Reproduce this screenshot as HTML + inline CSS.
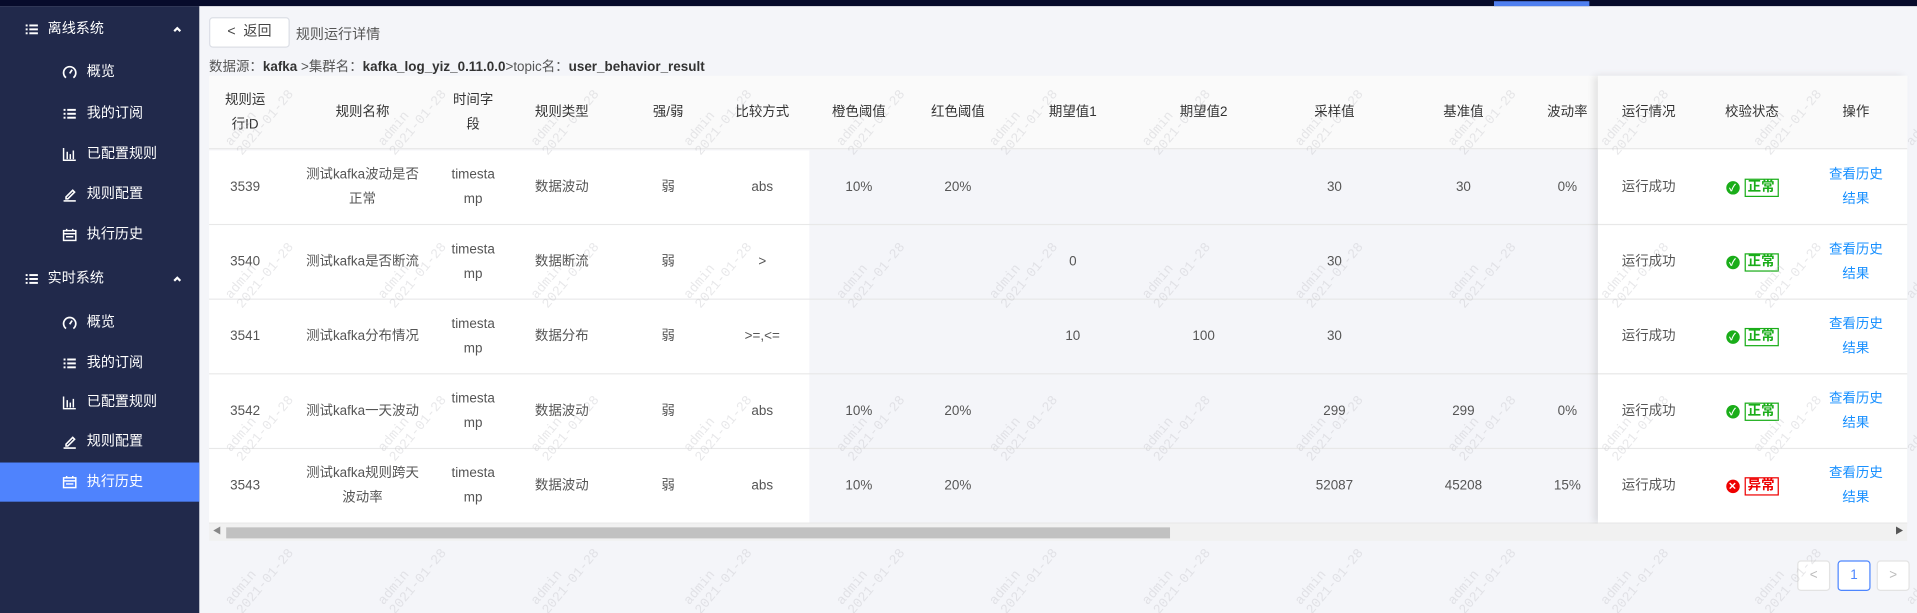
<!DOCTYPE html>
<html><head><meta charset="utf-8">
<style>
*{box-sizing:border-box;margin:0;padding:0}
html,body{width:1917px;height:613px;overflow:hidden;background:#f4f5f9}
body{font-family:"Liberation Sans","Noto Sans CJK SC",sans-serif}
#s{position:absolute;left:0;top:0;width:1568px;height:501px;transform:scale(1.22258,1.2236);transform-origin:0 0;background:#f4f5f9;overflow:hidden}
.top{position:absolute;left:0;top:0;width:1568px;height:5px;background:#070b2b;z-index:5}
.top i{position:absolute;left:1222px;top:1px;width:78px;height:4px;background:#4f7ff0}
.side{position:absolute;left:0;top:5px;width:163px;height:496px;background:#21294b;color:#fff;font-size:11.5px;z-index:4}
.mi{position:absolute;left:0;width:163px;height:32px;line-height:32px}
.mi svg{position:absolute;top:10px;width:12px;height:12px}
.mi .tx{position:absolute;top:0}
.act{background:#4f83fd}
.btn{position:absolute;left:171px;top:14px;width:66px;height:25px;background:#fff;border:1px solid #dcdfe6;border-radius:3px;font-size:11.5px;color:#444;line-height:23px;padding-left:14px}
.ttl{position:absolute;left:242px;top:20px;font-size:11.5px;color:#555}
.bc{position:absolute;left:171px;top:46px;font-size:11px;color:#555;white-space:nowrap}
.bc b{color:#333}
.tbl{position:absolute;left:171px;top:62px;width:1389px;height:380px;font-size:11px;color:#555}
.hd{position:absolute;left:0;top:0;width:1389px;height:60px;background:#fafafa;border-bottom:1px solid #e8e8e8}
.c{position:absolute;display:flex;align-items:center;justify-content:center;text-align:center;line-height:20px}
.hd .c{color:#333;height:60px;top:0}
.row{position:absolute;left:0;width:1389px;height:61px;border-bottom:1px solid #e8e8e8}
.wh{position:absolute;left:0;top:0;width:491px;height:60px;background:#fff}
.row .c{height:60px;top:0}
.fx{position:absolute;left:1136px;top:0;width:253px;height:366px;background:#fff;box-shadow:-3px 0 6px rgba(0,0,0,.1)}
.fx .r{position:absolute;left:0;width:253px;height:61px;border-bottom:1px solid #e8e8e8}
.fx .h{background:#fafafa;height:60px}
.tag{display:inline-block;border:1px solid #1aad19;color:#1aad19;font-weight:bold;font-size:11px;line-height:13px;padding:0 2px;margin-left:4px}
.dot{display:inline-block;width:11px;height:11px;border-radius:50%;background:#1aad19;color:#fff;font-size:8px;line-height:11px;text-align:center;font-weight:bold}
.bad .tag{border-color:#e00;color:#e00}.bad .dot{background:#e00}
.lnk{color:#1890ff}
.sb{position:absolute;left:0;top:366px;width:1389px;height:14px;background:#f1f1f1}
.sb .th{position:absolute;left:14px;top:3px;width:772px;height:9px;background:#c1c1c1}
.pg{position:absolute;top:458px;width:27px;height:25px;background:#fff;border:1px solid #e3e3e3;border-radius:3px;text-align:center;line-height:23px;font-size:11px;color:#bbb}
#wm{position:absolute;left:0;top:0;width:1568px;height:501px;z-index:3;pointer-events:none}
.wm{position:absolute;color:rgba(190,190,195,.35);font-family:"Liberation Mono",monospace;font-size:11px;line-height:12px;transform:rotate(-50deg);white-space:nowrap}
</style></head><body><div id="s">
<div class="top"><i></i></div>
<div class="side" id="side"></div>
<div class="btn">&lt;&nbsp; 返回</div>
<div class="ttl">规则运行详情</div>
<div class="bc">数据源：<b>kafka</b> &gt;集群名：<b>kafka_log_yiz_0.11.0.0</b>&gt;topic名：<b>user_behavior_result</b></div>
<div class="tbl">
<div class="hd">
<div class="c" style="left:0;width:59px">规则运<br>行ID</div>
<div class="c" style="left:59px;width:133px">规则名称</div>
<div class="c" style="left:192px;width:48px">时间字<br>段</div>
<div class="c" style="left:240px;width:97px">规则类型</div>
<div class="c" style="left:337px;width:77px">强/弱</div>
<div class="c" style="left:414px;width:77px">比较方式</div>
<div class="c" style="left:491px;width:81px">橙色阈值</div>
<div class="c" style="left:572px;width:81px">红色阈值</div>
<div class="c" style="left:653px;width:107px">期望值1</div>
<div class="c" style="left:760px;width:107px">期望值2</div>
<div class="c" style="left:867px;width:107px">采样值</div>
<div class="c" style="left:974px;width:104px">基准值</div>
<div class="c" style="left:1078px;width:66px">波动率</div>
</div>
<div id="rows"></div>
<div class="sb"><span style="position:absolute;left:3px;top:1px;font-size:7px;color:#888">◀</span><div class="th"></div><span style="position:absolute;right:3px;top:1px;font-size:7px;color:#555">▶</span></div>
</div>
<div class="pg" style="left:1470px">&lt;</div>
<div class="pg" style="left:1503px;border-color:#4d86ff;color:#4d86ff">1</div>
<div class="pg" style="left:1535px">&gt;</div>
<div id="wm"></div>
</div>
<script>
var I={
list:'<svg viewBox="0 0 12 12" fill="#fff"><rect x="1" y="2" width="1.6" height="1.6"/><rect x="4" y="2" width="7" height="1.6"/><rect x="1" y="5.2" width="1.6" height="1.6"/><rect x="4" y="5.2" width="7" height="1.6"/><rect x="1" y="8.4" width="1.6" height="1.6"/><rect x="4" y="8.4" width="7" height="1.6"/></svg>',
gauge:'<svg viewBox="0 0 12 12" fill="none" stroke="#fff" stroke-width="1.4"><path d="M3 10.5A5 5 0 1 1 9 10.5"/><path d="M6 7L8 4"/></svg>',
bar:'<svg viewBox="0 0 12 12" fill="none" stroke="#fff" stroke-width="1.2"><path d="M1 1V11H11"/><path d="M4 10V4M6.5 10V6M9 10V3"/></svg>',
pen:'<svg viewBox="0 0 12 12" fill="none" stroke="#fff" stroke-width="1.3"><path d="M3 8L8.5 2.5L10 4L4.5 9.5H3Z"/><path d="M1 11.2H11"/></svg>',
cal:'<svg viewBox="0 0 12 12" fill="none" stroke="#fff" stroke-width="1.2"><rect x="1" y="2.5" width="10" height="8"/><path d="M1 5H11M3.5 1V3M8.5 1V3M3 7.5H9"/></svg>'};
var M=[[3,20,39,'list','离线系统',1,0],[38,51,71,'gauge','概览',0,0],[72,51,71,'list','我的订阅',0,0],[105,51,71,'bar','已配置规则',0,0],[138,51,71,'pen','规则配置',0,0],[171,51,71,'cal','执行历史',0,0],
[207,20,39,'list','实时系统',1,0],[243,51,71,'gauge','概览',0,0],[276,51,71,'list','我的订阅',0,0],[308,51,71,'bar','已配置规则',0,0],[340,51,71,'pen','规则配置',0,0],[373,51,71,'cal','执行历史',0,1]];
var s="";M.forEach(function(m){s+='<div class="mi'+(m[6]?' act':'')+'" style="top:'+m[0]+'px">'+I[m[3]].replace('<svg','<svg style="left:'+m[1]+'px"')+'<span class="tx" style="left:'+m[2]+'px">'+m[4]+'</span>'+(m[5]?'<svg viewBox="0 0 12 12" style="left:139px" fill="none" stroke="#fff" stroke-width="1.8"><path d="M3.5 7.5L6 5L8.5 7.5"/></svg>':'')+'</div>'});
document.getElementById('side').innerHTML=s;
var d=[["3539","测试kafka波动是否<br>正常","数据波动","弱","abs","10%","20%","","","30","30","0%",0],
["3540","测试kafka是否断流","数据断流","弱","&gt;","","","0","","30","","",0],
["3541","测试kafka分布情况","数据分布","弱","&gt;=,&lt;=","","","10","100","30","","",0],
["3542","测试kafka一天波动","数据波动","弱","abs","10%","20%","","","299","299","0%",0],
["3543","测试kafka规则跨天<br>波动率","数据波动","弱","abs","10%","20%","","","52087","45208","15%",1]];
var L=[[0,59],[59,133],[192,48],[240,97],[337,77],[414,77],[491,81],[572,81],[653,107],[760,107],[867,107],[974,104],[1078,66]];
var h="";
d.forEach(function(r,i){var t=61+i*61;h+='<div class="row" style="top:'+t+'px"><div class="wh"></div>';
var v=[r[0],r[1],"timesta<br>mp",r[2],r[3],r[4],r[5],r[6],r[7],r[8],r[9],r[10],r[11]];
v.forEach(function(x,j){h+='<div class="c" style="left:'+L[j][0]+'px;width:'+L[j][1]+'px">'+x+'</div>'});h+='</div>'});
h+='<div class="fx"><div class="r h"><div class="c" style="left:0;width:83px;height:60px;color:#333">运行情况</div><div class="c" style="left:83px;width:86px;height:60px;color:#333">校验状态</div><div class="c" style="left:169px;width:84px;height:60px;color:#333">操作</div></div>';
d.forEach(function(r,i){var t=61+i*61;h+='<div class="r'+(r[12]?' bad':'')+'" style="top:'+t+'px"><div class="c" style="left:0;width:83px;height:60px">运行成功</div><div class="c" style="left:83px;width:86px;height:60px"><span class="dot">'+(r[12]?'✕':'✓')+'</span><span class="tag">'+(r[12]?'异常':'正常')+'</span></div><div class="c lnk" style="left:169px;width:84px;height:60px">查看历史<br>结果</div></div>'});
h+='</div>';
document.getElementById('rows').innerHTML=h;
var w="";for(var y=-40;y<520;y+=125)for(var x=180;x<1600;x+=125)w+='<div class="wm" style="left:'+x+'px;top:'+y+'px">admin<br>2021-01-28</div>';
document.getElementById('wm').innerHTML=w;
</script>
</body></html>
